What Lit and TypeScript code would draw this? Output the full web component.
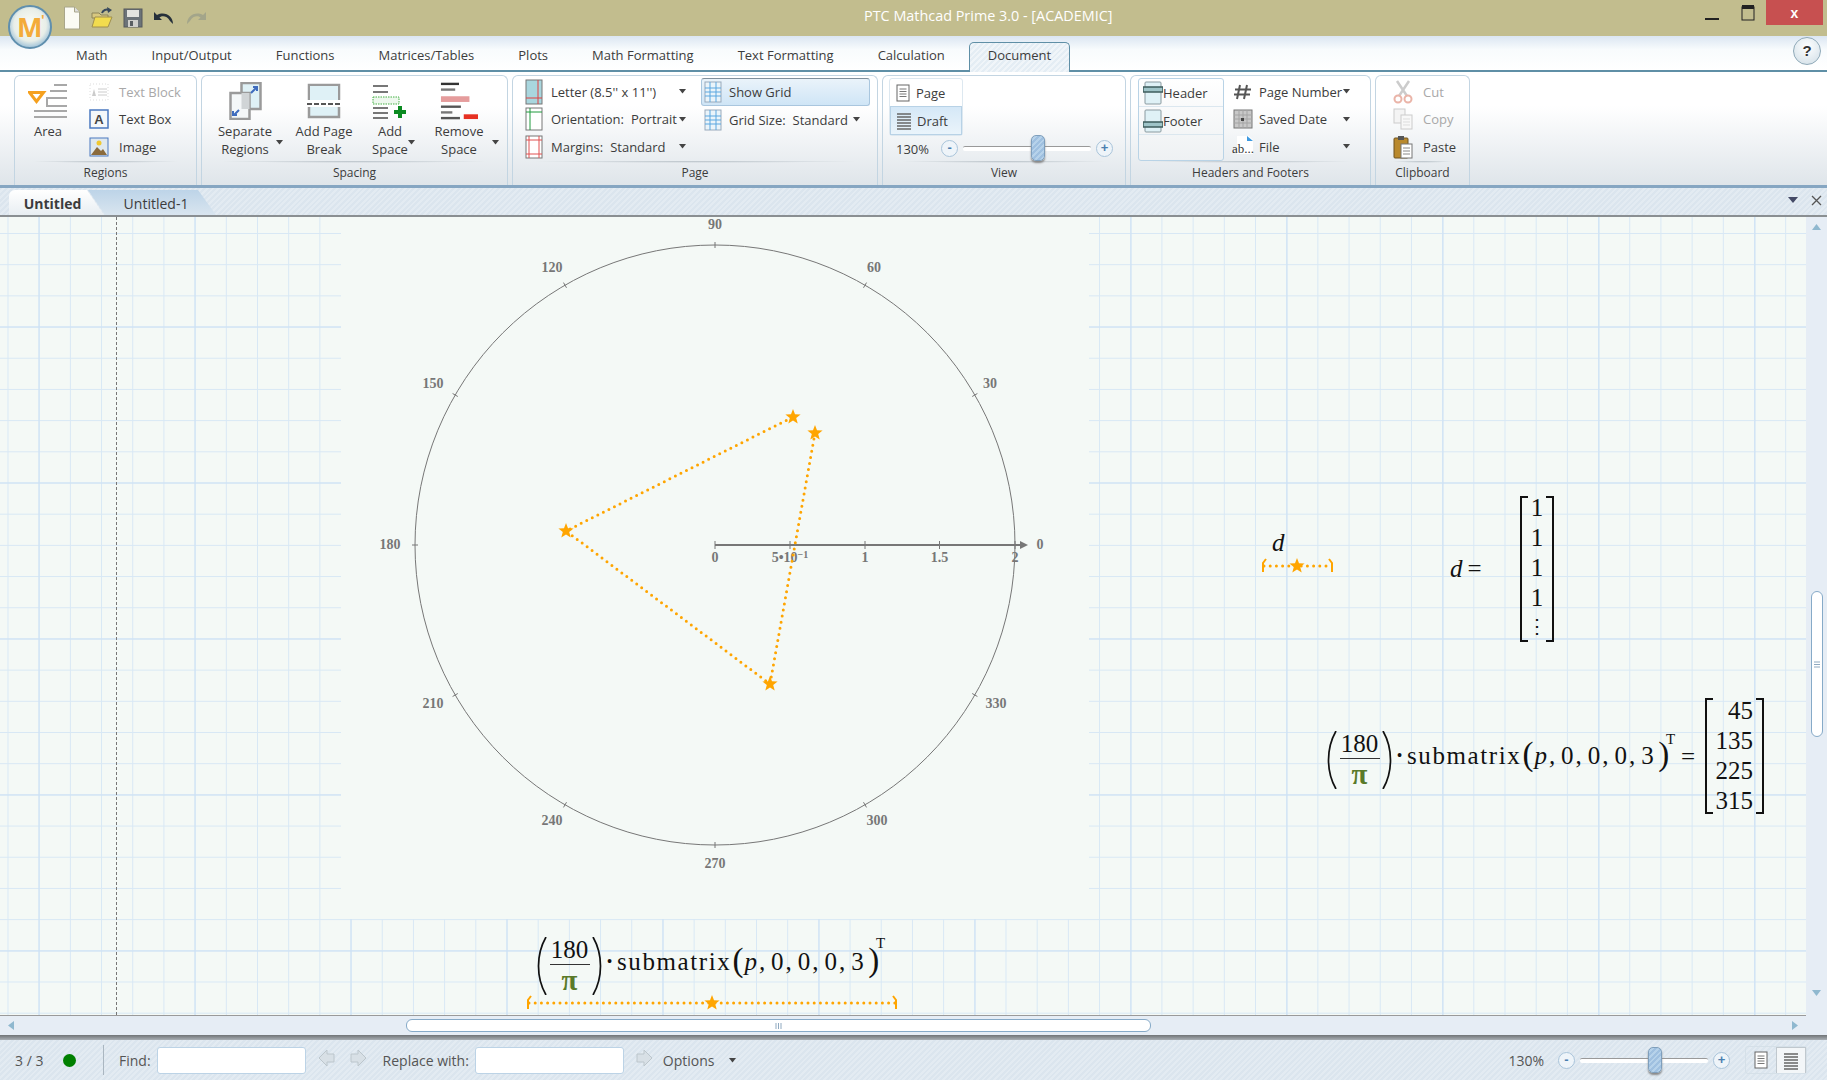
import {LitElement, css, html, svg} from 'lit';
import {customElement} from 'lit/decorators.js';

const ORANGE = '#ffa500';

function starPoints(cx: number, cy: number, r: number) {
  const pts: string[] = [];
  for (let i = 0; i < 10; i++) {
    const rad = i % 2 ? r * 0.42 : r;
    const a = -Math.PI / 2 + (i * Math.PI) / 5;
    pts.push(`${(cx + rad * Math.cos(a)).toFixed(1)},${(cy + rad * Math.sin(a)).toFixed(1)}`);
  }
  return pts.join(' ');
}

const icon = (w: number, h: number, body: unknown) => html`<svg class="ic" width=${w} height=${h} viewBox="0 0 ${w} ${h}">${body}</svg>`;

const caret = html`<svg class="caret" width="7" height="5" viewBox="0 0 7 5"><path d="M0 0h7L3.5 4.5z" fill="#444"/></svg>`;

const lines = (x1: number, x2: number, ys: number[], color: string, sw = 2) =>
  ys.map((y) => svg`<line x1=${x1} x2=${x2} y1=${y} y2=${y} stroke=${color} stroke-width=${sw}/>`);

const icons = {
  fresh: icon(18, 24, svg`<path d="M1.5 1h10l5 5v17h-15z" fill="#fbfbf4" stroke="#a9a68a"/><path d="M11.5 1v5h5" fill="#ddd" stroke="#a9a68a"/>`),
  open: icon(22, 22, svg`<path d="M1 6h7l2 2h7v3H1z" fill="#d8c880" stroke="#8c845a"/><path d="M1 20l3-10h17l-4 10z" fill="#f2dc4e" stroke="#a09050"/><path d="M11 6c1-3 4-4 7-3" fill="none" stroke="#37485c" stroke-width="2"/><path d="M16 0l5 3-4 3z" fill="#37485c"/>`),
  save: icon(20, 20, svg`<rect x="1" y="1" width="18" height="18" fill="#6c7378" stroke="#55595c"/><rect x="4" y="2" width="12" height="7" fill="#e4e4e0"/><rect x="5" y="12" width="10" height="7" fill="#d0d0cc"/><rect x="7" y="13" width="3" height="5" fill="#5a5f62"/>`),
  undo: icon(22, 16, svg`<path d="M1 2v8h8L6.500 7.500C9 5.500 14 5.500 17 11l3 3c0-8-8-13-16-9z" fill="#26303a"/>`),
  redo: icon(22, 16, svg`<path d="M21 2v8h-8l2.500-2.500C13 5.500 8 5.500 5 11l-3 3c0-8 8-13 16-9z" fill="#a3a58a"/>`),
  area: icon(40, 38, svg`${lines(26, 39, [3], '#a8a8a8')}${lines(22, 39, [9], '#a8a8a8')}<path d="M39 16H19v8h20" fill="none" stroke="#a8a8a8" stroke-width="2"/>${lines(6, 39, [29, 35], '#a8a8a8')}<path d="M1.500 10.500h14l-7 9z" fill="none" stroke="#f5a01e" stroke-width="3"/>`),
  block: icon(20, 18, svg`<rect x="1" y="1" width="18" height="16" fill="none" stroke="#ddd" stroke-dasharray="1 2"/>${lines(9, 18, [6, 9, 12], '#ccc', 1)}<path d="M3 13l2-7 2 7z" fill="#ccc"/>`),
  textbox: icon(20, 20, svg`<rect x="1" y="1" width="18" height="18" fill="#f4f7fa" stroke="#4a78c0" stroke-width="1.500"/><text x="10" y="15" text-anchor="middle" font-family="Liberation Sans" font-weight="700" font-size="13" fill="#444">A</text>`),
  image: icon(20, 20, svg`<rect x="1" y="1" width="18" height="18" fill="#dfe8ee" stroke="#4a78c0"/><path d="M2 18l6-8 4 4 2-2 4 6z" fill="#8a6a3c"/><circle cx="10" cy="6" r="2.500" fill="#f0c830"/>`),
  separate: icon(33, 38, svg`<rect x="12.500" y="1" width="19" height="26" fill="#dff1f6" stroke="#9a9a9a" stroke-width="2.500"/><rect x="1.500" y="11" width="19" height="26" fill="#f4f7f8" stroke="#9a9a9a" stroke-width="2.500"/><rect x="12.500" y="11" width="8" height="16" fill="#d0d4d6"/><path d="M22 11l5-5M24 5h4v4M5 33l5-5M4 29v4h4" fill="none" stroke="#3f6cbe" stroke-width="2"/>`),
  pagebreak: icon(34, 36, svg`<path d="M2 17V2h30v15M2 24v10h30V24" fill="#dff1f6" stroke="#9a9a9a" stroke-width="2.500"/><rect x="3" y="3" width="28" height="14" fill="#dff1f6"/><line x1="0" x2="34" y1="21" y2="21" stroke="#555" stroke-width="2" stroke-dasharray="5 2"/>`),
  addspace: icon(36, 38, svg`${lines(1, 16, [4, 10], '#777')}<rect x="1" y="15" width="26" height="7" fill="#eef8ee" stroke="#45b045" stroke-dasharray="1.500 1"/>${lines(1, 16, [26, 31, 36], '#777')}<path d="M26 24h4v4h4v4h-4v4h-4v-4h-4v-4h4z" fill="#0a8a20"/>`),
  removespace: icon(40, 40, svg`${lines(1, 20, [2], '#333', 2.500)}${lines(1, 16, [8], '#777', 2.500)}<rect x="1" y="15" width="30" height="6" fill="#e59c9c"/>${lines(1, 22, [26], '#555', 2.500)}${lines(1, 13, [32], '#777', 2.500)}${lines(1, 21, [38], '#555', 2.500)}<rect x="25" y="34" width="15" height="5" fill="#e63022"/>`),
  letter: icon(18, 26, svg`<rect x="1" y="1" width="16" height="24" fill="#a9d6de" stroke="#777"/><path d="M1 19h16M13 1v24" stroke="#e04040"/>`),
  orient: icon(18, 24, svg`<rect x="1" y="1" width="16" height="22" fill="#fff" stroke="#777"/><path d="M1 5h16M5 1v22" stroke="#1e9a3c"/>`),
  margins: icon(18, 24, svg`<rect x="1" y="1" width="16" height="22" fill="#fff" stroke="#777"/><path d="M1 5h16M1 19h16M4 1v22M14 1v22" stroke="#e05050"/>`),
  grid: icon(18, 24, svg`<rect x="1" y="2" width="16" height="20" fill="#eaf4fa" stroke="#9ab"/><path d="M1 8h16M1 12h16M1 16h16M6 2v20M12 2v20" stroke="#5aa7e0"/>`),
  page: icon(14, 18, svg`<rect x="1" y="1" width="12" height="16" fill="#fff" stroke="#666"/>${lines(3.500, 10.500, [5, 7.500, 10, 12.500], '#777', 1)}`),
  draft: icon(14, 18, svg`${lines(0, 14, [2, 5, 8, 11, 14, 17], '#666', 1.500)}`),
  header: icon(20, 24, svg`<rect x="2" y="1" width="16" height="22" rx="1" fill="#dff1f6" stroke="#8a9aa0"/><rect x="0" y="6" width="20" height="5" fill="#9fc4c8" stroke="#3e5c5c" stroke-width="1.500"/>`),
  footer: icon(20, 24, svg`<rect x="2" y="1" width="16" height="22" rx="1" fill="#dff1f6" stroke="#8a9aa0"/><rect x="0" y="13" width="20" height="5" fill="#9fc4c8" stroke="#3e5c5c" stroke-width="1.500"/>`),
  hash: icon(18, 18, svg`<path d="M6 2L3 16M13 2l-3 14M1 6.500h16M0 11.500h16" stroke="#555" stroke-width="2" fill="none"/>`),
  date: icon(20, 20, svg`<rect x="1" y="1" width="18" height="18" fill="#c8c8c8" stroke="#777"/><path d="M1 6h18M6 1v18M10 1v18M14 1v18M1 10h18M1 14h18" stroke="#a4a4a4"/><rect x="8" y="9" width="3" height="3" fill="#444"/>`),
  file: icon(22, 22, svg`<path d="M5 0h12l4 4v14H5z" fill="#fff"/><path d="M15 0l6 5h-6z" fill="#3f9ae0"/><text x="0" y="17" font-family="Liberation Serif" font-size="13" fill="#333">ab...</text>`),
  cut: icon(20, 24, svg`<path d="M4 1l10 15M16 1L6 16" stroke="#ccc" stroke-width="2.500"/><circle cx="5" cy="19" r="3.500" fill="none" stroke="#eab4a8" stroke-width="2"/><circle cx="15" cy="19" r="3.500" fill="none" stroke="#eab4a8" stroke-width="2"/>`),
  copy: icon(20, 22, svg`<rect x="1" y="1" width="11" height="14" fill="#f4f4f4" stroke="#ccc"/><rect x="8" y="7" width="11" height="14" fill="#f8f8f8" stroke="#ccc"/>${lines(10, 17, [11, 14, 17], '#ddd', 1)}`),
  paste: icon(20, 24, svg`<rect x="1" y="3" width="14" height="20" rx="1" fill="#b9892d" stroke="#6e5320"/><rect x="5" y="1" width="6" height="4" fill="#555"/><rect x="8" y="9" width="11" height="14" fill="#fff" stroke="#777"/>${lines(10, 17, [13, 16, 19], '#888', 1)}`),
  back: icon(18, 18, svg`<path d="M9 1L1 9l8 8v-4h7V5H9z" fill="#d8e0e6" stroke="#bcc6cc"/>`),
  forward: icon(18, 18, svg`<path d="M9 1l8 8-8 8v-4H2V5h7z" fill="#d8e0e6" stroke="#bcc6cc"/>`),
};

@customElement('zoom-slider')
export class ZoomSlider extends LitElement {
  static styles = css`
    :host { display: flex; align-items: center; }
    .btn {
      box-sizing: border-box;
      width: 17px;
      height: 17px;
      border: 1px solid #a9c4da;
      border-radius: 50%;
      background: #eef4f9;
      color: #4a7fb0;
      font: 700 13px/14px "Liberation Sans", sans-serif;
      text-align: center;
    }
    .track {
      position: relative;
      width: 128px;
      height: 4px;
      margin: 0 5px;
      border-top: 1px solid #999;
      border-radius: 2px;
      background: #fff;
    }
    .thumb {
      position: absolute;
      left: 68px;
      top: -12px;
      width: 12px;
      height: 24px;
      border: 1px solid #7f9fbc;
      border-radius: 5px;
      background: repeating-linear-gradient(135deg, #9fc0e0 0 2px, #b6d2ea 2px 4px);
      box-shadow: 0 2px 2px #888;
    }
  `;
  render() {
    return html`<div class="btn">-</div><div class="track"><div class="thumb"></div></div><div class="btn">+</div>`;
  }
}

const paren = (h: number, left: boolean) => html`<svg class="paren" width="10" height=${h} viewBox="0 0 10 ${h}">
  <path d=${left ? `M9 0C-1 ${h * 0.3} -1 ${h * 0.7} 9 ${h}` : `M1 0C11 ${h * 0.3} 11 ${h * 0.7} 1 ${h}`} fill="none" stroke="#111" stroke-width="1.700"/></svg>`;

const legend = (w: number, star: number) => html`<svg width=${w} height="16" viewBox="0 0 ${w} 16">
  <line x1="3" x2=${w - 3} y1="8" y2="8" stroke=${ORANGE} stroke-width="3" stroke-linecap="round" stroke-dasharray="0 6.200"/>
  <path d="M5 1L2 5v9M${w - 5} 1L${w - 2} 5v9" fill="none" stroke=${ORANGE} stroke-width="2"/>
  <polygon points=${starPoints(star, 8, 8)} fill=${ORANGE}/></svg>`;

const expression = html`
  <span class="frac-wrap">
    ${paren(58, true)}
    <span class="frac"><span class="num">180</span><span class="pi">π</span></span>
    ${paren(58, false)}
  </span>
  <span class="dot">•</span><span class="fn">submatrix</span><span class="open">(</span>
  <span class="args"><i class="arg">p,</i><span class="arg">0,</span><span class="arg">0,</span><span class="arg">0,</span><span class="last">3</span></span><span class="open">)</span>`;

@customElement('polar-plot')
export class PolarPlot extends LitElement {
  static styles = css`
    :host { display: block; background: #f4f9f6; }
    svg { display: block; }
    text { font: 700 14px "Liberation Serif", serif; fill: #777; }
  `;
  render() {
    const cx = 374;
    const cy = 328;
    const r = 300;
    const trace = [[474, 216], [429, 467], [225, 314], [452, 200]];
    const labels: [string, number, number][] = [
      ['90', 374, 12], ['60', 533, 55], ['30', 649, 171], ['0', 699, 332], ['330', 655, 491], ['300', 536, 608],
      ['270', 374, 651], ['240', 211, 608], ['210', 92, 491], ['180', 49, 332], ['150', 92, 171], ['120', 211, 55],
    ];
    const angles = Array.from({length: 12}, (_, i) => (i * Math.PI) / 6);
    return html`<svg width="748" height="702" viewBox="0 0 748 702">
      <circle cx=${cx} cy=${cy} r=${r} fill="none" stroke="#777" stroke-width="1"/>
      ${angles.map((a) => svg`<line x1=${cx + (r - 3) * Math.cos(a)} y1=${cy - (r - 3) * Math.sin(a)} x2=${cx + (r + 3) * Math.cos(a)} y2=${cy - (r + 3) * Math.sin(a)} stroke="#777"/>`)}
      ${labels.map(([t, x, y]) => svg`<text x=${x} y=${y} text-anchor="middle">${t}</text>`)}
      <line x1=${cx} x2=${cx + 308} y1=${cy} y2=${cy} stroke="#777" stroke-width="2"/>
      <path d="M${cx + 305} ${cy - 4}l8 4-8 4z" fill="#777"/>
      ${[0, 75, 150, 224.500, 300].map((d) => svg`<line x1=${cx + d} x2=${cx + d} y1=${cy - 4} y2=${cy + 4} stroke="#777"/>`)}
      <text x=${cx} y=${cy + 17} text-anchor="middle">0</text>
      <text x=${cx + 75} y=${cy + 17} text-anchor="middle">5•10<tspan dy="-4" font-size="10">−1</tspan></text>
      <text x=${cx + 150} y=${cy + 17} text-anchor="middle">1</text>
      <text x=${cx + 224.500} y=${cy + 17} text-anchor="middle">1.5</text>
      <text x=${cx + 300} y=${cy + 17} text-anchor="middle">2</text>
      <polyline points=${trace.map((p) => p.join(',')).join(' ')} fill="none" stroke=${ORANGE} stroke-width="3" stroke-linecap="round" stroke-dasharray="0 6.200"/>
      ${trace.map(([x, y]) => svg`<polygon points=${starPoints(x, y, 8)} fill=${ORANGE}/>`)}
    </svg>`;
  }
}

@customElement('app-root')
export class AppRoot extends LitElement {
  static styles = css`
    :host {
      display: flex;
      flex-direction: column;
      width: 1827px;
      height: 1080px;
      overflow: hidden;
      font: 13px "Open Sans", sans-serif;
      color: #3c3c3c;
      background: #fff;
    }
    svg { flex: none; }

    /* title bar */
    .titlebar {
      flex: none;
      display: flex;
      height: 36px;
      background: #c2bd8e;
      position: relative;
    }
    .logo { position: absolute; left: 8px; top: 5px; z-index: 2; }
    .qat { display: flex; align-items: center; gap: 10px; width: 864px; height: 36px; box-sizing: border-box; padding-left: 63px; }
    .app-title { color: #fff; font-size: 14.400px; line-height: 31px; }
    .winbtns { margin-left: auto; display: flex; }
    .win { width: 36px; height: 25px; display: flex; align-items: center; justify-content: center; }
    .close { width: 57px; margin: 0 4px 0 0; background: #c75050; color: #fff; font: 700 14px "Liberation Sans", sans-serif; }

    /* ribbon tabs */
    .tabs {
      flex: none;
      display: flex;
      align-items: stretch;
      box-sizing: border-box;
      height: 36px;
      padding: 6px 0 0 54px;
      background: linear-gradient(#dbe6f2, #f8fbfd 40%, #fff);
      border-bottom: 2px solid #5f8fa6;
      position: relative;
    }
    .tab { padding: 0 22px; line-height: 26px; font-size: 13px; }
    .tab.active {
      margin: 0 0 -2px 2px;
      padding: 0 18px;
      border: 1px solid #5f8fa6;
      border-bottom: 0;
      border-radius: 5px 5px 0 0;
      background: repeating-linear-gradient(135deg, #e4edf4 0 2px, #f0f5f9 2px 4px);
      line-height: 25px;
    }
    .help {
      position: absolute;
      right: 6px;
      top: 1px;
      box-sizing: border-box;
      width: 28px;
      height: 28px;
      border: 1px solid #8fa9b8;
      border-radius: 50%;
      background: radial-gradient(circle at 50% 35%, #fff, #cfdde6);
      font: 700 15px/26px "Liberation Sans", sans-serif;
      text-align: center;
      color: #333;
    }

    /* ribbon */
    .ribbon {
      flex: none;
      display: flex;
      gap: 4px;
      box-sizing: border-box;
      height: 116px;
      padding: 3px 0 0 14px;
      background: linear-gradient(#fff 30%, #dfe5ea);
      border-bottom: 3px solid #86a6c2;
    }
    .group {
      display: flex;
      flex-direction: column;
      box-sizing: border-box;
      height: 110px;
      border: 1px solid #c3d5e2;
      border-bottom: 0;
      border-radius: 6px 6px 0 0;
    }
    .g-regions { width: 183px; }
    .g-spacing { width: 307px; }
    .g-page { width: 366px; }
    .g-view { width: 244px; }
    .g-hf { width: 241px; }
    .g-clip { width: 95px; }
    .body { flex: none; display: flex; height: 85px; box-sizing: border-box; padding-top: 2px; }
    .glabel {
      margin: 0 16px;
      padding-top: 3px;
      text-align: center;
      font-size: 12px;
      line-height: 18px;
      background: radial-gradient(ellipse 50% 2px at 50% 0, #b5bec5, transparent);
    }
    .col { display: flex; flex-direction: column; }
    .row { display: flex; align-items: center; height: 27.500px; white-space: nowrap; }
    .off { color: #a8a8a8; }
    .big {
      position: relative;
      display: flex;
      flex-direction: column;
      align-items: center;
      box-sizing: border-box;
      height: 83px;
      padding-top: 4px;
      line-height: 18px;
      text-align: center;
      font-size: 13px;
    }
    .big .ic { height: 38px; margin-bottom: 2px; }
    .big .caret { position: absolute; right: 2px; bottom: 16px; }

    .area { width: 66px; }
    .area .ic { margin-bottom: 2px; }
    .regions-col { padding-left: 8px; }
    .regions-col .ic { margin-right: 10px; }

    .sep-regions { width: 80px; margin-left: 3px; }
    .add-break { width: 78px; }
    .add-space { width: 54px; }
    .rem-space { width: 84px; }

    .page-left { width: 188px; padding-left: 12px; box-sizing: border-box; }
    .page-left .ic { margin-right: 8px; }
    .page-left .caret { margin-left: auto; margin-right: 15px; }
    .page-left .val { margin-left: 7px; }
    .page-right { width: 169px; }
    .showgrid {
      box-sizing: border-box;
      height: 28px;
      padding-left: 2px;
      border: 1px solid #a9c6de;
      border-top-color: #7f8f9c;
      border-radius: 3px;
      background: linear-gradient(#eaf3fa, #cfe5f6);
    }
    .page-right .ic { margin-right: 7px; }
    .gridsize { padding-left: 3px; }
    .gridsize .val { margin-left: 7px; }
    .gridsize .caret { margin-left: 5px; }

    .view-body { flex-direction: column; padding-left: 6px; }
    .viewbtns {
      box-sizing: border-box;
      width: 74px;
      height: 58px;
      border: 1px solid #dde8f0;
      border-radius: 3px;
      background: #fff;
    }
    .vbtn { display: flex; align-items: center; gap: 6px; height: 27px; padding-left: 6px; }
    .vbtn.on {
      box-sizing: border-box;
      height: 29px;
      margin: 0;
      border: 1px solid #b8d2e6;
      background: linear-gradient(#d5e8f7, #eaf4fb);
    }
    .zoomrow { display: flex; align-items: center; height: 27px; padding-left: 7px; }
    .zoomrow zoom-slider { margin-left: 12px; }

    .hf-box {
      box-sizing: border-box;
      width: 86px;
      height: 83px;
      margin: 0 0 0 7px;
      border: 1px solid #b9d3e6;
      border-radius: 3px;
      background: linear-gradient(#fff, #eef1f3);
    }
    .hf-row { display: flex; align-items: center; height: 28px; padding-left: 4px; border-bottom: 1px solid #dbe7ef; box-sizing: border-box; }
    .hf-right { width: 130px; padding-left: 8px; box-sizing: border-box; }
    .hf-right .ic { width: 22px; margin-right: 5px; }
    .hf-right .caret { margin-left: auto; margin-right: 4px; }
    .clip-col { padding-left: 17px; }
    .clip-col .ic { margin-right: 10px; }

    /* document tabs */
    .doctabs, .status {
      background: repeating-linear-gradient(135deg, #dbe5ee 0 2px, #e3ebf2 2px 4px);
    }
    .doctabs {
      flex: none;
      display: flex;
      align-items: flex-end;
      box-sizing: border-box;
      height: 29px;
      padding-left: 9px;
      border-bottom: 2px solid #8a8f92;
    }
    .dt { height: 25px; line-height: 27px; }
    .dt1 {
      width: 95px;
      font-weight: 700;
      font-size: 14px;
      text-align: center;
      padding-right: 8px;
      box-sizing: border-box;
      background: linear-gradient(#fff, #e8eef2);
      border-radius: 6px 0 0 0;
      clip-path: polygon(0 0, 82% 0, 100% 100%, 0 100%);
    }
    .dt2 {
      width: 128px;
      margin-left: -16px;
      box-sizing: border-box;
      padding-left: 8px;
      text-align: center;
      font-size: 14px;
      background: linear-gradient(#bdd4e8, #d9e5ef);
      clip-path: polygon(0 0, 110px 0, 128px 100%, 17px 100%);
    }
    .dt-right { margin-left: auto; align-self: flex-start; display: flex; align-items: center; gap: 13px; height: 24px; padding-right: 5px; }

    /* worksheet */
    .work {
      flex: none;
      display: grid;
      grid-template-columns: 1806px 21px;
      grid-template-rows: 799px 19px;
      height: 818px;
      background: #e6edf5;
    }
    .doc {
      position: relative;
      overflow: hidden;
      border-bottom: 1px solid #9a9a9a;
      background-color: #f4f9f6;
      background-image:
        linear-gradient(90deg, #cbe0f4 1px, transparent 1px),
        linear-gradient(#cbe0f4 1px, transparent 1px),
        linear-gradient(90deg, #d8e8f5 1px, transparent 1px),
        linear-gradient(#d8e8f5 1px, transparent 1px);
      background-size: 156px 156px, 156px 156px, 31.200px 31.200px, 31.200px 31.200px;
      background-position: 38.500px 0, 0 109.500px, 7.500px 0, 0 16px;
    }
    .margin-line { position: absolute; left: 116px; top: 0; bottom: 0; border-left: 1px dashed #777; }
    polar-plot { position: absolute; left: 341px; top: 0; width: 748px; height: 702px; }

    .math {
      position: absolute;
      display: flex;
      align-items: center;
      font: 25px/30px "Liberation Serif", serif;
      color: #111;
      white-space: nowrap;
    }
    .math i { font-style: italic; }
    .m-d { left: 1272px; top: 311px; }
    .m-dl { left: 1261px; top: 341px; }
    .m-deq { left: 1450px; top: 337px; }
    .m-dmat { left: 1520px; top: 279px; }
    .m-expr { left: 1327px; top: 513px; }
    .m-t { left: 1666px; top: 514px; font-size: 15px; line-height: 16px; }
    .m-eq { left: 1681px; top: 525px; }
    .m-emat { left: 1705px; top: 481px; }
    .m-b { left: 537px; top: 719px; }
    .m-bt { left: 876px; top: 718px; font-size: 15px; line-height: 16px; }
    .m-bl { left: 526px; top: 778px; }

    .frac-wrap { display: flex; align-items: center; width: 65px; justify-content: space-between; }
    .frac { display: flex; flex-direction: column; align-items: center; width: 40px; }
    .num { width: 40px; text-align: center; line-height: 28px; border-bottom: 1.500px solid #333; }
    .pi { color: #5a7a2a; font: 700 29px/30px "Liberation Serif", serif; }
    .dot { width: 15px; text-align: center; font-size: 16px; margin-bottom: 8px; }
    .fn { letter-spacing: 1.600px; margin-bottom: 8px; }
    .open { font-size: 33px; font-weight: 400; width: 13px; text-align: center; margin-bottom: 12px; }
    .args { display: flex; margin-bottom: 8px; }
    .arg { width: 26.700px; letter-spacing: 2px; }
    .last { width: 16px; }
    .mat {
      display: grid;
      align-content: start;
      box-sizing: border-box;
      border-left: 2px solid #111;
      border-right: 2px solid #111;
      position: relative;
      text-align: center;
      line-height: 30px;
    }
    .mat::before, .mat::after {
      content: "";
      position: absolute;
      top: 0;
      bottom: 0;
      width: 6px;
      border-top: 2px solid #111;
      border-bottom: 2px solid #111;
    }
    .mat::before { left: 0; }
    .mat::after { right: 0; }
    .mat-d { width: 34px; height: 146px; }
    .mat-d span:first-child { margin-top: -3px; }
    .mat-e { width: 59px; height: 116px; text-align: right; padding-right: 9px; }
    .mat-e span:first-child { margin-top: -2px; }
    .vdots { font-size: 20px; line-height: 26px; }

    /* scrollbars */
    .vscroll {
      grid-row: 1 / 3;
      grid-column: 2;
      display: flex;
      flex-direction: column;
      align-items: center;
      background: #e6edf5;
    }
    .thumb-v {
      box-sizing: border-box;
      width: 12px;
      height: 146px;
      margin-top: 361px;
      border: 1px solid #86aac8;
      border-radius: 6px;
      background: #fff;
      display: flex;
      align-items: center;
      justify-content: center;
    }
    .arrow-u { margin-top: 7px; }
    .arrow-d { margin-top: 253px; }
    .hscroll { display: flex; align-items: center; justify-content: space-between; padding: 0 8px; }
    .thumb-h {
      box-sizing: border-box;
      width: 745px;
      height: 13px;
      margin-left: 1px;
      border: 1px solid #86aac8;
      border-radius: 6px;
      background: #fff;
      display: flex;
      align-items: center;
      justify-content: center;
    }
    .hscroll .l { margin-right: 391px; }
    .hscroll .r { margin-left: auto; }

    /* status bar */
    .shadow { flex: none; height: 5px; background: linear-gradient(#6f7376, #a9afb4); }
    .status {
      flex: 1;
      display: flex;
      align-items: center;
      font-size: 14px;
      color: #555;
    }
    .count { width: 48px; padding-left: 15px; }
    .okdot { width: 13px; height: 13px; border-radius: 50%; background: #008000; margin-right: 27px; }
    .vsep { width: 1px; height: 30px; background: #aab6c0; margin-right: 15px; }
    .input {
      box-sizing: border-box;
      width: 149px;
      height: 27px;
      border: 1px solid #bcd3e6;
      border-radius: 3px;
      background: #fff;
      margin-left: 6px;
    }
    .find-back { margin-left: 12px; }
    .find-fwd { margin-left: 13px; margin-right: 16px; }
    .rep-fwd { margin-left: 11px; margin-right: 10px; }
    .status .caret { margin-left: 14px; }
    .status-zoom { margin-left: auto; display: flex; align-items: center; }
    .status-zoom zoom-slider { margin-left: 14px; }
    .viewtoggle {
      display: flex;
      align-items: center;
      margin: 0 20px 0 15px;
      height: 26px;
      border: 1px solid #d5e0e8;
      border-radius: 3px;
    }
    .vt { width: 30px; height: 26px; display: flex; align-items: center; justify-content: center; }
    .vt.on { background: #f3f6f8; border: 1px solid #c0c8ce; border-bottom: 0; box-sizing: border-box; }
  `;

  render() {
    return html`
      <div class="titlebar">
        <svg class="logo" width="44" height="44" viewBox="0 0 44 44">
          <defs>
            <radialGradient id="lg" cx="50%" cy="45%" r="55%">
              <stop offset="0" stop-color="#fdfdf8"/><stop offset=".7" stop-color="#e8eee8"/><stop offset="1" stop-color="#9cc0d8"/>
            </radialGradient>
          </defs>
          <circle cx="22" cy="22" r="21" fill="url(#lg)" stroke="#5f8fae" stroke-width="2"/>
          <text x="9" y="32" font-family="Open Sans" font-weight="700" font-size="27" fill="#f3ab3a">M</text>
          <text x="33" y="20" font-family="Open Sans" font-weight="700" font-size="14" fill="#f3ab3a">'</text>
        </svg>
        <div class="qat">${icons.fresh}${icons.open}${icons.save}${icons.undo}${icons.redo}</div>
        <div class="app-title">PTC Mathcad Prime 3.0 - [ACADEMIC]</div>
        <div class="winbtns">
          <div class="win"><svg width="14" height="16" viewBox="0 0 14 16"><rect y="13" width="14" height="2" fill="#222"/></svg></div>
          <div class="win"><svg width="16" height="18" viewBox="0 0 16 18"><rect x="2" y="3" width="12" height="13" fill="none" stroke="#222"/><rect x="2" y="1" width="12" height="4" fill="#222"/></svg></div>
          <div class="win close">x</div>
        </div>
      </div>

      <div class="tabs">
        ${['Math', 'Input/Output', 'Functions', 'Matrices/Tables', 'Plots', 'Math Formatting', 'Text Formatting', 'Calculation'].map((t) => html`<div class="tab">${t}</div>`)}
        <div class="tab active">Document</div>
        <div class="help">?</div>
      </div>

      <div class="ribbon">
        <div class="group g-regions">
          <div class="body">
            <div class="big area">${icons.area}<span>Area</span></div>
            <div class="col regions-col">
              <div class="row off">${icons.block}Text Block</div>
              <div class="row">${icons.textbox}Text Box</div>
              <div class="row">${icons.image}Image</div>
            </div>
          </div>
          <div class="glabel">Regions</div>
        </div>

        <div class="group g-spacing">
          <div class="body">
            <div class="big sep-regions">${icons.separate}<span>Separate<br>Regions</span>${caret}</div>
            <div class="big add-break">${icons.pagebreak}<span>Add Page<br>Break</span></div>
            <div class="big add-space">${icons.addspace}<span>Add<br>Space</span>${caret}</div>
            <div class="big rem-space">${icons.removespace}<span>Remove<br>Space</span>${caret}</div>
          </div>
          <div class="glabel">Spacing</div>
        </div>

        <div class="group g-page">
          <div class="body">
            <div class="col page-left">
              <div class="row">${icons.letter}Letter (8.5'' x 11'')${caret}</div>
              <div class="row">${icons.orient}Orientation:<span class="val">Portrait</span>${caret}</div>
              <div class="row">${icons.margins}Margins:<span class="val">Standard</span>${caret}</div>
            </div>
            <div class="col page-right">
              <div class="row showgrid">${icons.grid}Show Grid</div>
              <div class="row gridsize">${icons.grid}Grid Size:<span class="val">Standard</span>${caret}</div>
            </div>
          </div>
          <div class="glabel">Page</div>
        </div>

        <div class="group g-view">
          <div class="body view-body">
            <div class="viewbtns">
              <div class="vbtn">${icons.page}Page</div>
              <div class="vbtn on">${icons.draft}Draft</div>
            </div>
            <div class="zoomrow">130%<zoom-slider></zoom-slider></div>
          </div>
          <div class="glabel">View</div>
        </div>

        <div class="group g-hf">
          <div class="body">
            <div class="hf-box">
              <div class="hf-row">${icons.header}Header</div>
              <div class="hf-row">${icons.footer}Footer</div>
            </div>
            <div class="col hf-right">
              <div class="row">${icons.hash}Page Number${caret}</div>
              <div class="row">${icons.date}Saved Date${caret}</div>
              <div class="row">${icons.file}File${caret}</div>
            </div>
          </div>
          <div class="glabel">Headers and Footers</div>
        </div>

        <div class="group g-clip">
          <div class="body">
            <div class="col clip-col">
              <div class="row off">${icons.cut}Cut</div>
              <div class="row off">${icons.copy}Copy</div>
              <div class="row">${icons.paste}Paste</div>
            </div>
          </div>
          <div class="glabel">Clipboard</div>
        </div>
      </div>

      <div class="doctabs">
        <div class="dt dt1">Untitled</div>
        <div class="dt dt2">Untitled-1</div>
        <div class="dt-right">
          <svg width="10" height="6" viewBox="0 0 10 6"><path d="M0 0h10L5 6z" fill="#444a66"/></svg>
          <svg width="11" height="11" viewBox="0 0 11 11"><path d="M1 1l9 9M10 1l-9 9" stroke="#555" stroke-width="1.300"/></svg>
        </div>
      </div>

      <div class="work">
        <div class="doc">
          <div class="margin-line"></div>
          <polar-plot></polar-plot>

          <div class="math m-d"><i>d</i></div>
          <div class="math m-dl">${legend(73, 36)}</div>
          <div class="math m-deq"><i>d</i>&thinsp;=</div>
          <div class="math m-dmat">
            <div class="mat mat-d"><span>1</span><span>1</span><span>1</span><span>1</span><span class="vdots">⋮</span></div>
          </div>

          <div class="math m-expr">${expression}</div>
          <div class="math m-t">T</div>
          <div class="math m-eq">=</div>
          <div class="math m-emat">
            <div class="mat mat-e"><span>45</span><span>135</span><span>225</span><span>315</span></div>
          </div>

          <div class="math m-b">${expression}</div>
          <div class="math m-bt">T</div>
          <div class="math m-bl">${legend(372, 186)}</div>
        </div>

        <div class="vscroll">
          <svg class="arrow-u" width="9" height="6" viewBox="0 0 9 6"><path d="M4.500 0L9 6H0z" fill="#8fb8cf"/></svg>
          <div class="thumb-v"><svg width="6" height="7" viewBox="0 0 6 7"><path d="M0 1h6M0 3.500h6M0 6h6" stroke="#8fa9c0"/></svg></div>
          <svg class="arrow-d" width="9" height="6" viewBox="0 0 9 6"><path d="M4.500 6L9 0H0z" fill="#8fb8cf"/></svg>
        </div>

        <div class="hscroll">
          <svg class="l" width="6" height="9" viewBox="0 0 6 9"><path d="M0 4.500L6 0v9z" fill="#8fb8cf"/></svg>
          <div class="thumb-h"><svg width="8" height="6" viewBox="0 0 8 6"><path d="M1 0v6M3.500 0v6M6 0v6" stroke="#8fa9c0"/></svg></div>
          <svg class="r" width="6" height="9" viewBox="0 0 6 9"><path d="M6 4.500L0 0v9z" fill="#8fb8cf"/></svg>
        </div>
      </div>

      <div class="shadow"></div>
      <div class="status">
        <div class="count">3 / 3</div>
        <div class="okdot"></div>
        <div class="vsep"></div>
        Find:<div class="input"></div>
        <span class="find-back">${icons.back}</span><span class="find-fwd">${icons.forward}</span>
        Replace with:<div class="input"></div>
        <span class="rep-fwd">${icons.forward}</span>
        Options${caret}
        <div class="status-zoom">
          130%<zoom-slider></zoom-slider>
          <div class="viewtoggle">
            <div class="vt">${icons.page}</div>
            <div class="vt on">${icons.draft}</div>
          </div>
        </div>
      </div>
    `;
  }
}
